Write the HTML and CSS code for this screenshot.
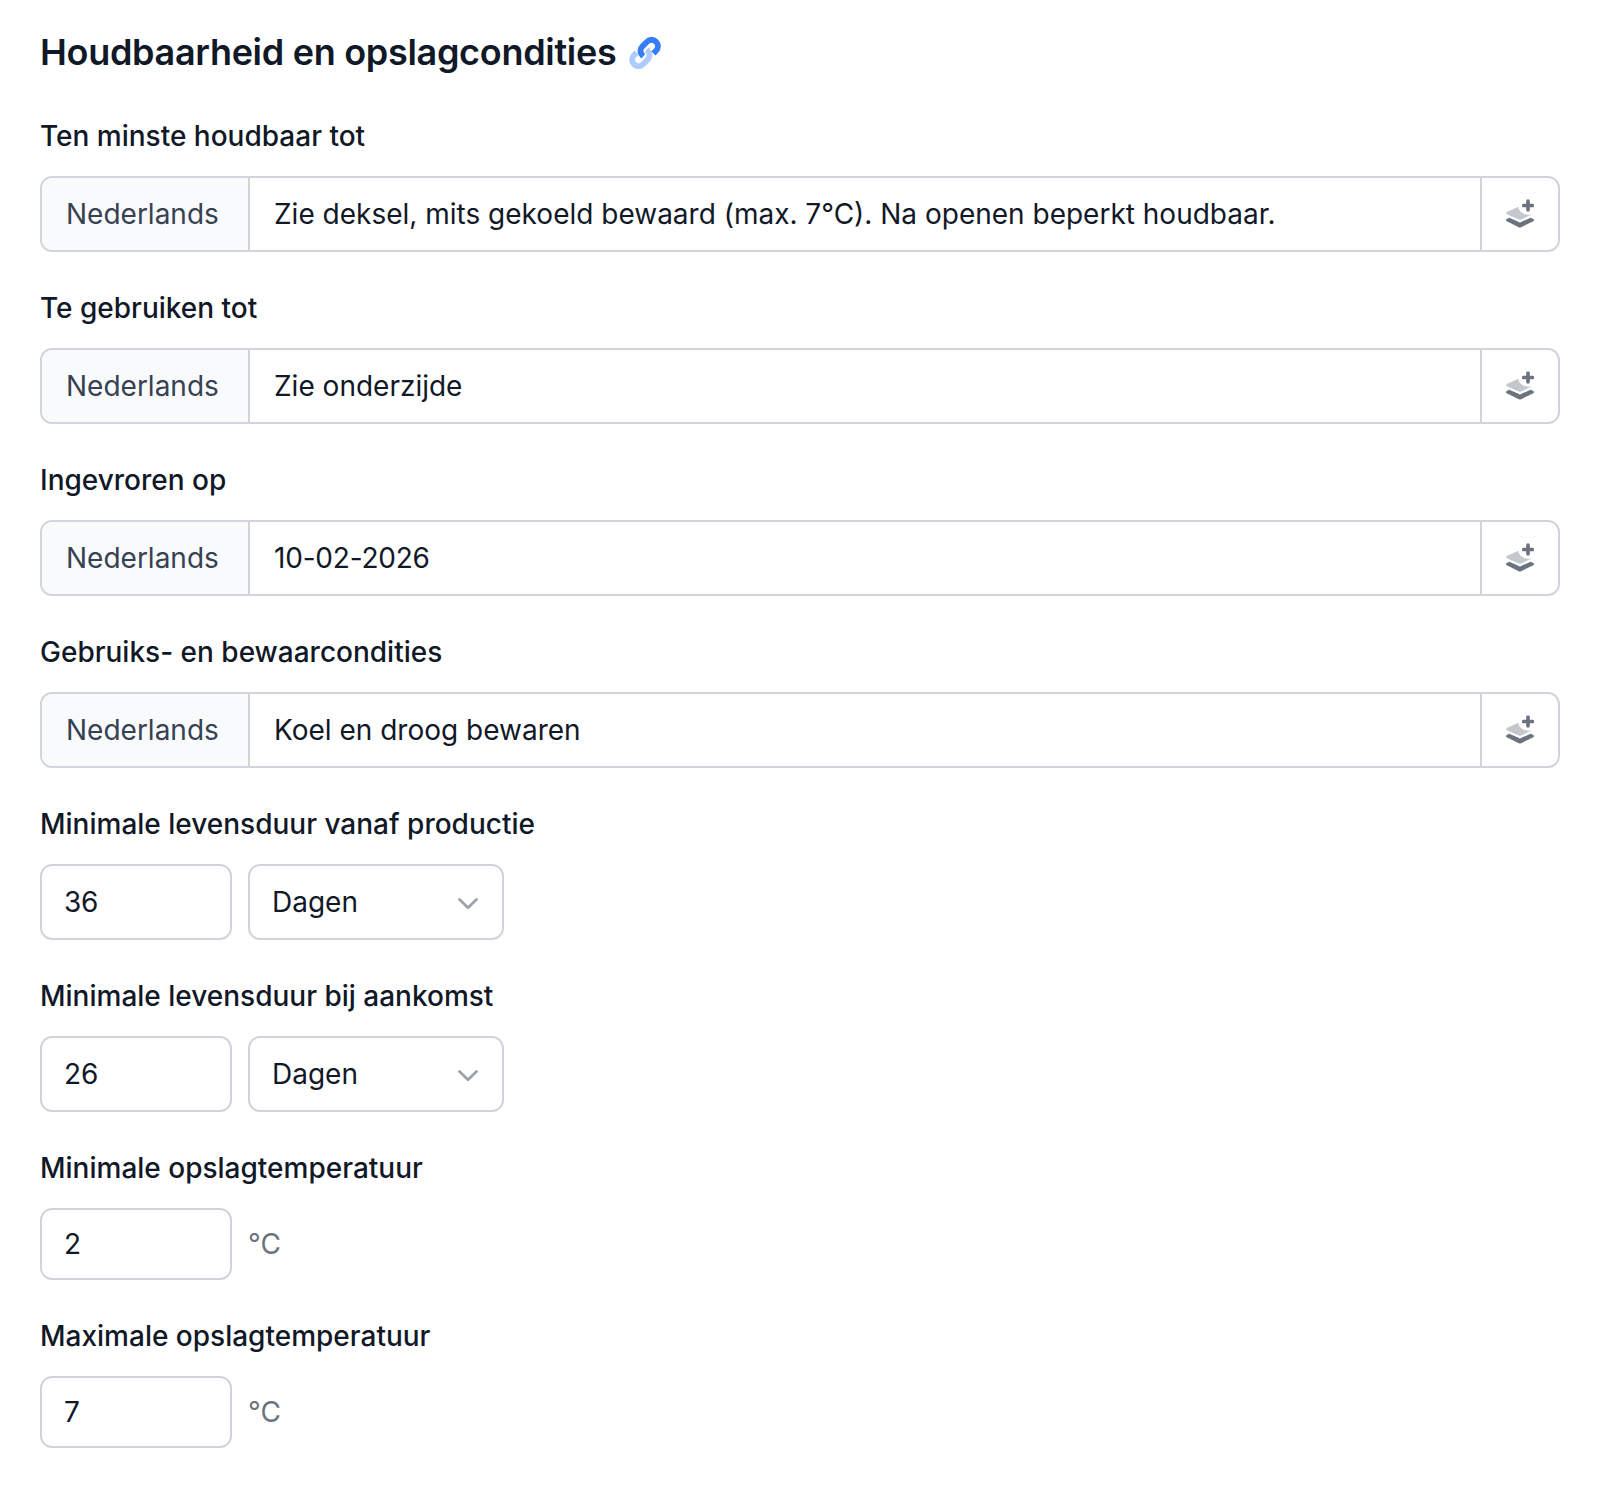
FILE: index.html
```
<!DOCTYPE html>
<html lang="nl">
<head>
    <meta charset="UTF-8">
    <meta name="viewport" content="width=device-width, initial-scale=1.0">
    <title>Houdbaarheid en opslagcondities</title>
    <link rel="stylesheet" href="styles.css">
</head>
<body>
    <!-- shared icons -->
    <svg class="sprite">
        <symbol id="layer-plus" viewBox="0 0 28 30">
            <path class="light" d="M.8 13 12.4 7.8C12.7 12.4 17.5 16.6 25.4 15.6L15.2 20.6Q14 21.2 12.8 20.6L.8 15.2Q-.6 14.1.8 13Z"/>
            <path d="M3.4 18.8 14 23.5 24.6 18.8 27.3 20.1Q28.7 21.1 27.3 22.2L15.2 28.2Q14 28.8 12.8 28.2L.7 22.2Q-.7 21.1.7 20.1Z"/>
            <path class="plus" d="M22 2.2V10.8M17.7 6.5H26.3"/>
        </symbol>
        <symbol id="chevron" viewBox="0 0 20 12">
            <path d="M1.5 1.5 10 9.8 18.5 1.5"/>
        </symbol>
    </svg>

    <form class="container">
        <h2 class="title">
            Houdbaarheid en opslagcondities
            <svg class="icon-link" viewBox="0 0 32 32">
                <path class="light" d="M17.6 12.8C21.2 15.6 21.4 19.8 18.6 22.6L14 27.2C11.4 29.8 7.4 29.8 5 27.2C2.4 24.6 2.4 20.8 5 18.2L7.6 15.6"/>
                <path d="M14.4 19.2C10.8 16.4 10.6 12.2 13.4 9.4L18 4.8C20.6 2.2 24.6 2.2 27 4.8C29.6 7.4 29.6 11.2 27 13.8L24.4 16.4"/>
            </svg>
        </h2>

        <div class="field">
            <label for="best-before">Ten minste houdbaar tot</label>
            <div class="group">
                <span class="lang">Nederlands</span>
                <input id="best-before" type="text" value="Zie deksel, mits gekoeld bewaard (max. 7°C). Na openen beperkt houdbaar.">
                <button type="button"><svg class="icon-layer"><use href="#layer-plus"/></svg></button>
            </div>
        </div>

        <div class="field">
            <label for="use-by">Te gebruiken tot</label>
            <div class="group">
                <span class="lang">Nederlands</span>
                <input id="use-by" type="text" value="Zie onderzijde">
                <button type="button"><svg class="icon-layer"><use href="#layer-plus"/></svg></button>
            </div>
        </div>

        <div class="field">
            <label for="frozen-on">Ingevroren op</label>
            <div class="group">
                <span class="lang">Nederlands</span>
                <input id="frozen-on" class="digits" type="text" value="10-02-2026">
                <button type="button"><svg class="icon-layer"><use href="#layer-plus"/></svg></button>
            </div>
        </div>

        <div class="field">
            <label for="conditions">Gebruiks- en bewaarcondities</label>
            <div class="group">
                <span class="lang">Nederlands</span>
                <input id="conditions" type="text" value="Koel en droog bewaren">
                <button type="button"><svg class="icon-layer"><use href="#layer-plus"/></svg></button>
            </div>
        </div>

        <div class="field">
            <label for="life-production">Minimale levensduur vanaf productie</label>
            <div class="row">
                <input id="life-production" class="number digits" type="text" value="36">
                <div class="select">Dagen <svg class="icon-chevron"><use href="#chevron"/></svg></div>
            </div>
        </div>

        <div class="field">
            <label for="life-arrival">Minimale levensduur bij aankomst</label>
            <div class="row">
                <input id="life-arrival" class="number digits" type="text" value="26">
                <div class="select">Dagen <svg class="icon-chevron"><use href="#chevron"/></svg></div>
            </div>
        </div>

        <div class="field">
            <label for="temp-min">Minimale opslagtemperatuur</label>
            <div class="row small">
                <input id="temp-min" class="number digits" type="text" value="2">
                <span class="unit">°C</span>
            </div>
        </div>

        <div class="field">
            <label for="temp-max">Maximale opslagtemperatuur</label>
            <div class="row small">
                <input id="temp-max" class="number digits" type="text" value="7">
                <span class="unit">°C</span>
            </div>
        </div>
    </form>
</body>
</html>
```

FILE: styles.css
```
* {
    margin: 0;
    padding: 0;
    box-sizing: border-box;
}

body {
    background-color: #fff;
    color: #111827;
    font-family: Inter, "Liberation Sans", sans-serif;
    font-size: 28px;
    line-height: 40px;
}

input,
button {
    border: none;
    background: none;
    color: inherit;
    font: inherit;
    outline: none;
}

.sprite {
    display: none;
}

.container {
    width: 1600px;
    padding: 24px 40px 0;
}

.title {
    display: flex;
    align-items: center;
    gap: 13px;
    height: 56px;
    margin-bottom: 36px;
    font-size: 36px;
    font-weight: 600;
    letter-spacing: -0.3px;
}

.icon-link {
    width: 32px;
    height: 32px;
    margin-top: 2px;
    fill: none;
    stroke: #357df9;
    stroke-width: 5.8;
}

.icon-link .light {
    fill: none;
    stroke: #aecbfd;
}

.field {
    margin-bottom: 36px;
}

.field label {
    display: block;
    margin-bottom: 20px;
    font-weight: 500;
}

/* language prefix + text + button */
.group {
    display: flex;
    height: 76px;
    border: 2px solid #d1d5db;
    border-radius: 12px;
    overflow: hidden;
}

.group .lang {
    width: 208px;
    padding: 16px 24px;
    border-right: 2px solid #d1d5db;
    background-color: #f9fafb;
    color: #374151;
}

.group input {
    flex: 1;
    padding: 0 24px;
}

.group button {
    display: flex;
    align-items: center;
    justify-content: center;
    width: 78px;
    border-left: 2px solid #d1d5db;
}

.icon-layer {
    display: block;
    width: 28px;
    height: 30px;
    fill: #6b7280;
}

.icon-layer,
.icon-chevron {
    display: block;
}

.light {
    fill: #c4c7cc;
}

.plus {
    stroke: #6b7280;
    stroke-width: 3.7;
    stroke-linecap: round;
}

.digits {
    letter-spacing: -0.2px;
}

/* number + select or unit */
.row {
    display: flex;
    align-items: center;
    gap: 16px;
    height: 76px;
}

.row.small {
    height: 72px;
}

.number,
.select {
    height: 100%;
    border: 2px solid #d1d5db;
    border-radius: 12px;
    padding: 0 22px;
}

.number {
    width: 192px;
}

.select {
    display: flex;
    align-items: center;
    justify-content: space-between;
    width: 256px;
    padding-right: 24px;
}

.icon-chevron {
    width: 20px;
    height: 12px;
    margin-top: 3px;
    fill: none;
    stroke: #9ca3af;
    stroke-width: 2.8;
    stroke-linecap: round;
    stroke-linejoin: round;
}

.unit {
    color: #6b7280;
}
```
